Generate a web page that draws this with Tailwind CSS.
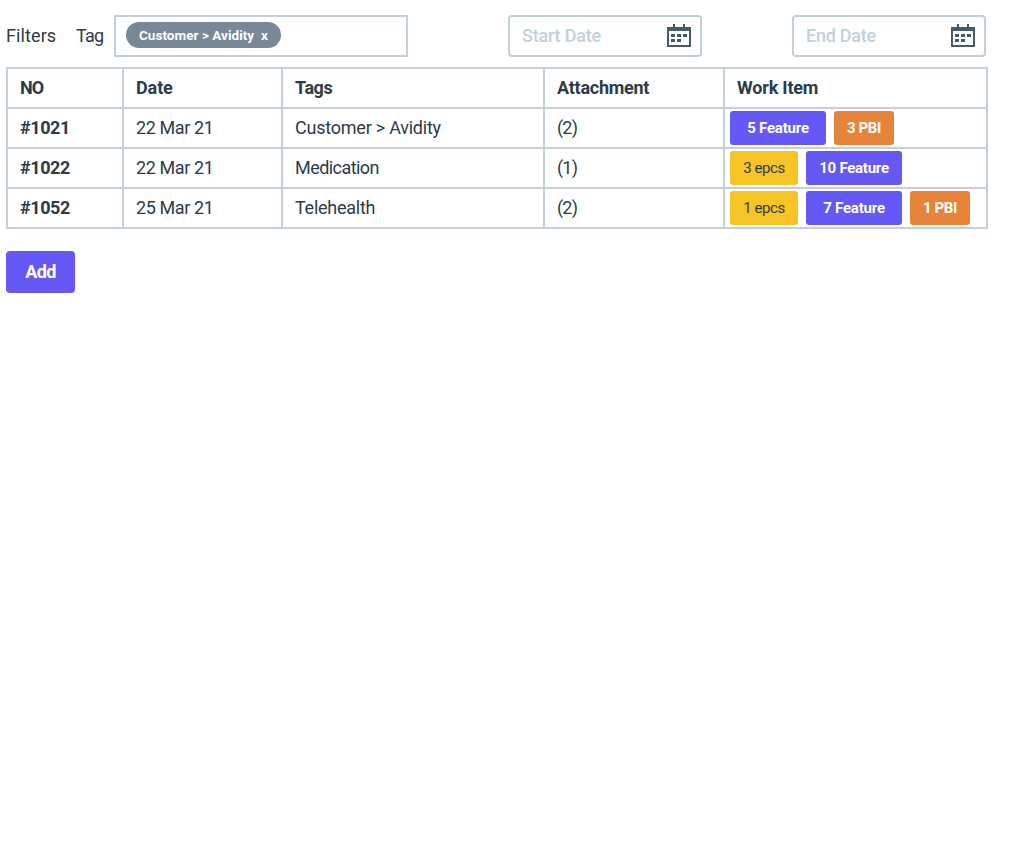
<!DOCTYPE html>
<html lang="en">
<head>
<meta charset="utf-8">
<title>Work items</title>
<script src="https://cdn.jsdelivr.net/npm/@tailwindcss/browser@4"></script>
</head>
<body class="bg-white font-['Roboto',sans-serif] text-lg leading-6 text-[#2c3b48]">
<main class="w-[988px] pl-1.5 pt-[15px] whitespace-nowrap">
  <div class="flex h-[42px] items-center">
    <span class="w-[69px] tracking-[0.1px]">Filters</span>
    <span class="w-[39px] tracking-[-0.75px] pl-px">Tag</span>
    <div class="h-[42px] w-[294px] border-2 border-[#c3d0db] pl-2.5 pt-[5px]">
      <span class="flex h-[26px] w-[155px] items-center rounded-full bg-[#788896] pl-[13px] text-[13.5px] font-bold text-white">
        <span class="w-[122px] tracking-[0.03px]">Customer &gt; Avidity</span><button>x</button>
      </span>
    </div>
    <div class="ml-[100px] flex h-[42px] w-[194px] items-center justify-between rounded border-2 border-[#c3d0db] pl-3 pr-[9px]">
      <span class="font-medium tracking-[-0.2px] text-[#c3d0db]">Start Date</span>
      <svg class="h-6 w-6" viewBox="0 0 24 24" fill="#475a69" shape-rendering="crispEdges"><path fill-rule="evenodd" d="M6 0h2v3h8V0h2v3h6v20H0V3h6zM2 7v14h20V7z"/><path d="M4 10h4v3H4zM10 10h4v3h-4zM16 10h4v3h-4zM4 15h4v3H4zM10 15h4v3h-4z"/></svg>
    </div>
    <div class="ml-[90px] flex h-[42px] w-[194px] items-center justify-between rounded border-2 border-[#c3d0db] pl-3 pr-[9px]">
      <span class="font-medium tracking-[-0.24px] text-[#c3d0db]">End Date</span>
      <svg class="h-6 w-6" viewBox="0 0 24 24" fill="#475a69" shape-rendering="crispEdges"><path fill-rule="evenodd" d="M6 0h2v3h8V0h2v3h6v20H0V3h6zM2 7v14h20V7z"/><path d="M4 10h4v3H4zM10 10h4v3h-4zM16 10h4v3h-4zM4 15h4v3H4zM10 15h4v3h-4z"/></svg>
    </div>
  </div>

  <div class="mt-2.5 grid w-[982px] grid-cols-[114px_157px_260px_178px_261px] auto-rows-[38px] gap-0.5 border-2 border-[#c3d0db] bg-[#c3d0db] *:flex *:items-center *:bg-white">
    <div class="pl-3 font-bold tracking-[-0.9px]">NO</div>
    <div class="pl-3 font-bold tracking-[-0.1px]">Date</div>
    <div class="pl-3 font-bold tracking-[-0.45px]">Tags</div>
    <div class="pl-3 font-bold tracking-[-0.25px]">Attachment</div>
    <div class="pl-3 font-bold tracking-[-0.2px]">Work Item</div>

    <div class="pl-3 font-bold tracking-[-0.4px]">#1021</div>
    <div class="pl-3 tracking-[-0.4px]">22 Mar 21</div>
    <div class="pl-3 tracking-[-0.23px]">Customer &gt; Avidity</div>
    <div class="pl-3 tracking-[-0.8px]">(2)</div>
    <div class="gap-2 pl-[5px] text-[15px] font-bold">
      <span class="flex h-[34px] w-24 items-center justify-center rounded-[3px] bg-[#6658f5] tracking-[-0.2px] text-white">5 Feature</span>
      <span class="flex h-[34px] w-[60px] items-center justify-center rounded-[3px] bg-[#e8833a] tracking-[-0.4px] text-white">3 PBI</span>
    </div>

    <div class="pl-3 font-bold tracking-[-0.4px]">#1022</div>
    <div class="pl-3 tracking-[-0.4px]">22 Mar 21</div>
    <div class="pl-3 tracking-[-0.55px]">Medication</div>
    <div class="pl-3 tracking-[-0.8px]">(1)</div>
    <div class="gap-2 pl-[5px] text-[15px] font-bold">
      <span class="flex h-[34px] w-[68px] items-center justify-center rounded-[3px] bg-[#f7c325] font-normal tracking-[-0.4px]">3 epcs</span>
      <span class="flex h-[34px] w-24 items-center justify-center rounded-[3px] bg-[#6658f5] tracking-[-0.25px] text-white">10 Feature</span>
    </div>

    <div class="pl-3 font-bold tracking-[-0.4px]">#1052</div>
    <div class="pl-3 tracking-[-0.4px]">25 Mar 21</div>
    <div class="pl-3 tracking-[-0.25px]">Telehealth</div>
    <div class="pl-3 tracking-[-0.8px]">(2)</div>
    <div class="gap-2 pl-[5px] text-[15px] font-bold">
      <span class="flex h-[34px] w-[68px] items-center justify-center rounded-[3px] bg-[#f7c325] font-normal tracking-[-0.4px]">1 epcs</span>
      <span class="flex h-[34px] w-24 items-center justify-center rounded-[3px] bg-[#6658f5] tracking-[-0.2px] text-white">7 Feature</span>
      <span class="flex h-[34px] w-[60px] items-center justify-center rounded-[3px] bg-[#e8833a] tracking-[-0.4px] text-white">1 PBI</span>
    </div>
  </div>

  <button class="mt-[22px] flex h-[42px] w-[69px] items-center justify-center rounded bg-[#6658f5] font-bold tracking-[-0.6px] text-white">Add</button>
</main>
</body>
</html>
